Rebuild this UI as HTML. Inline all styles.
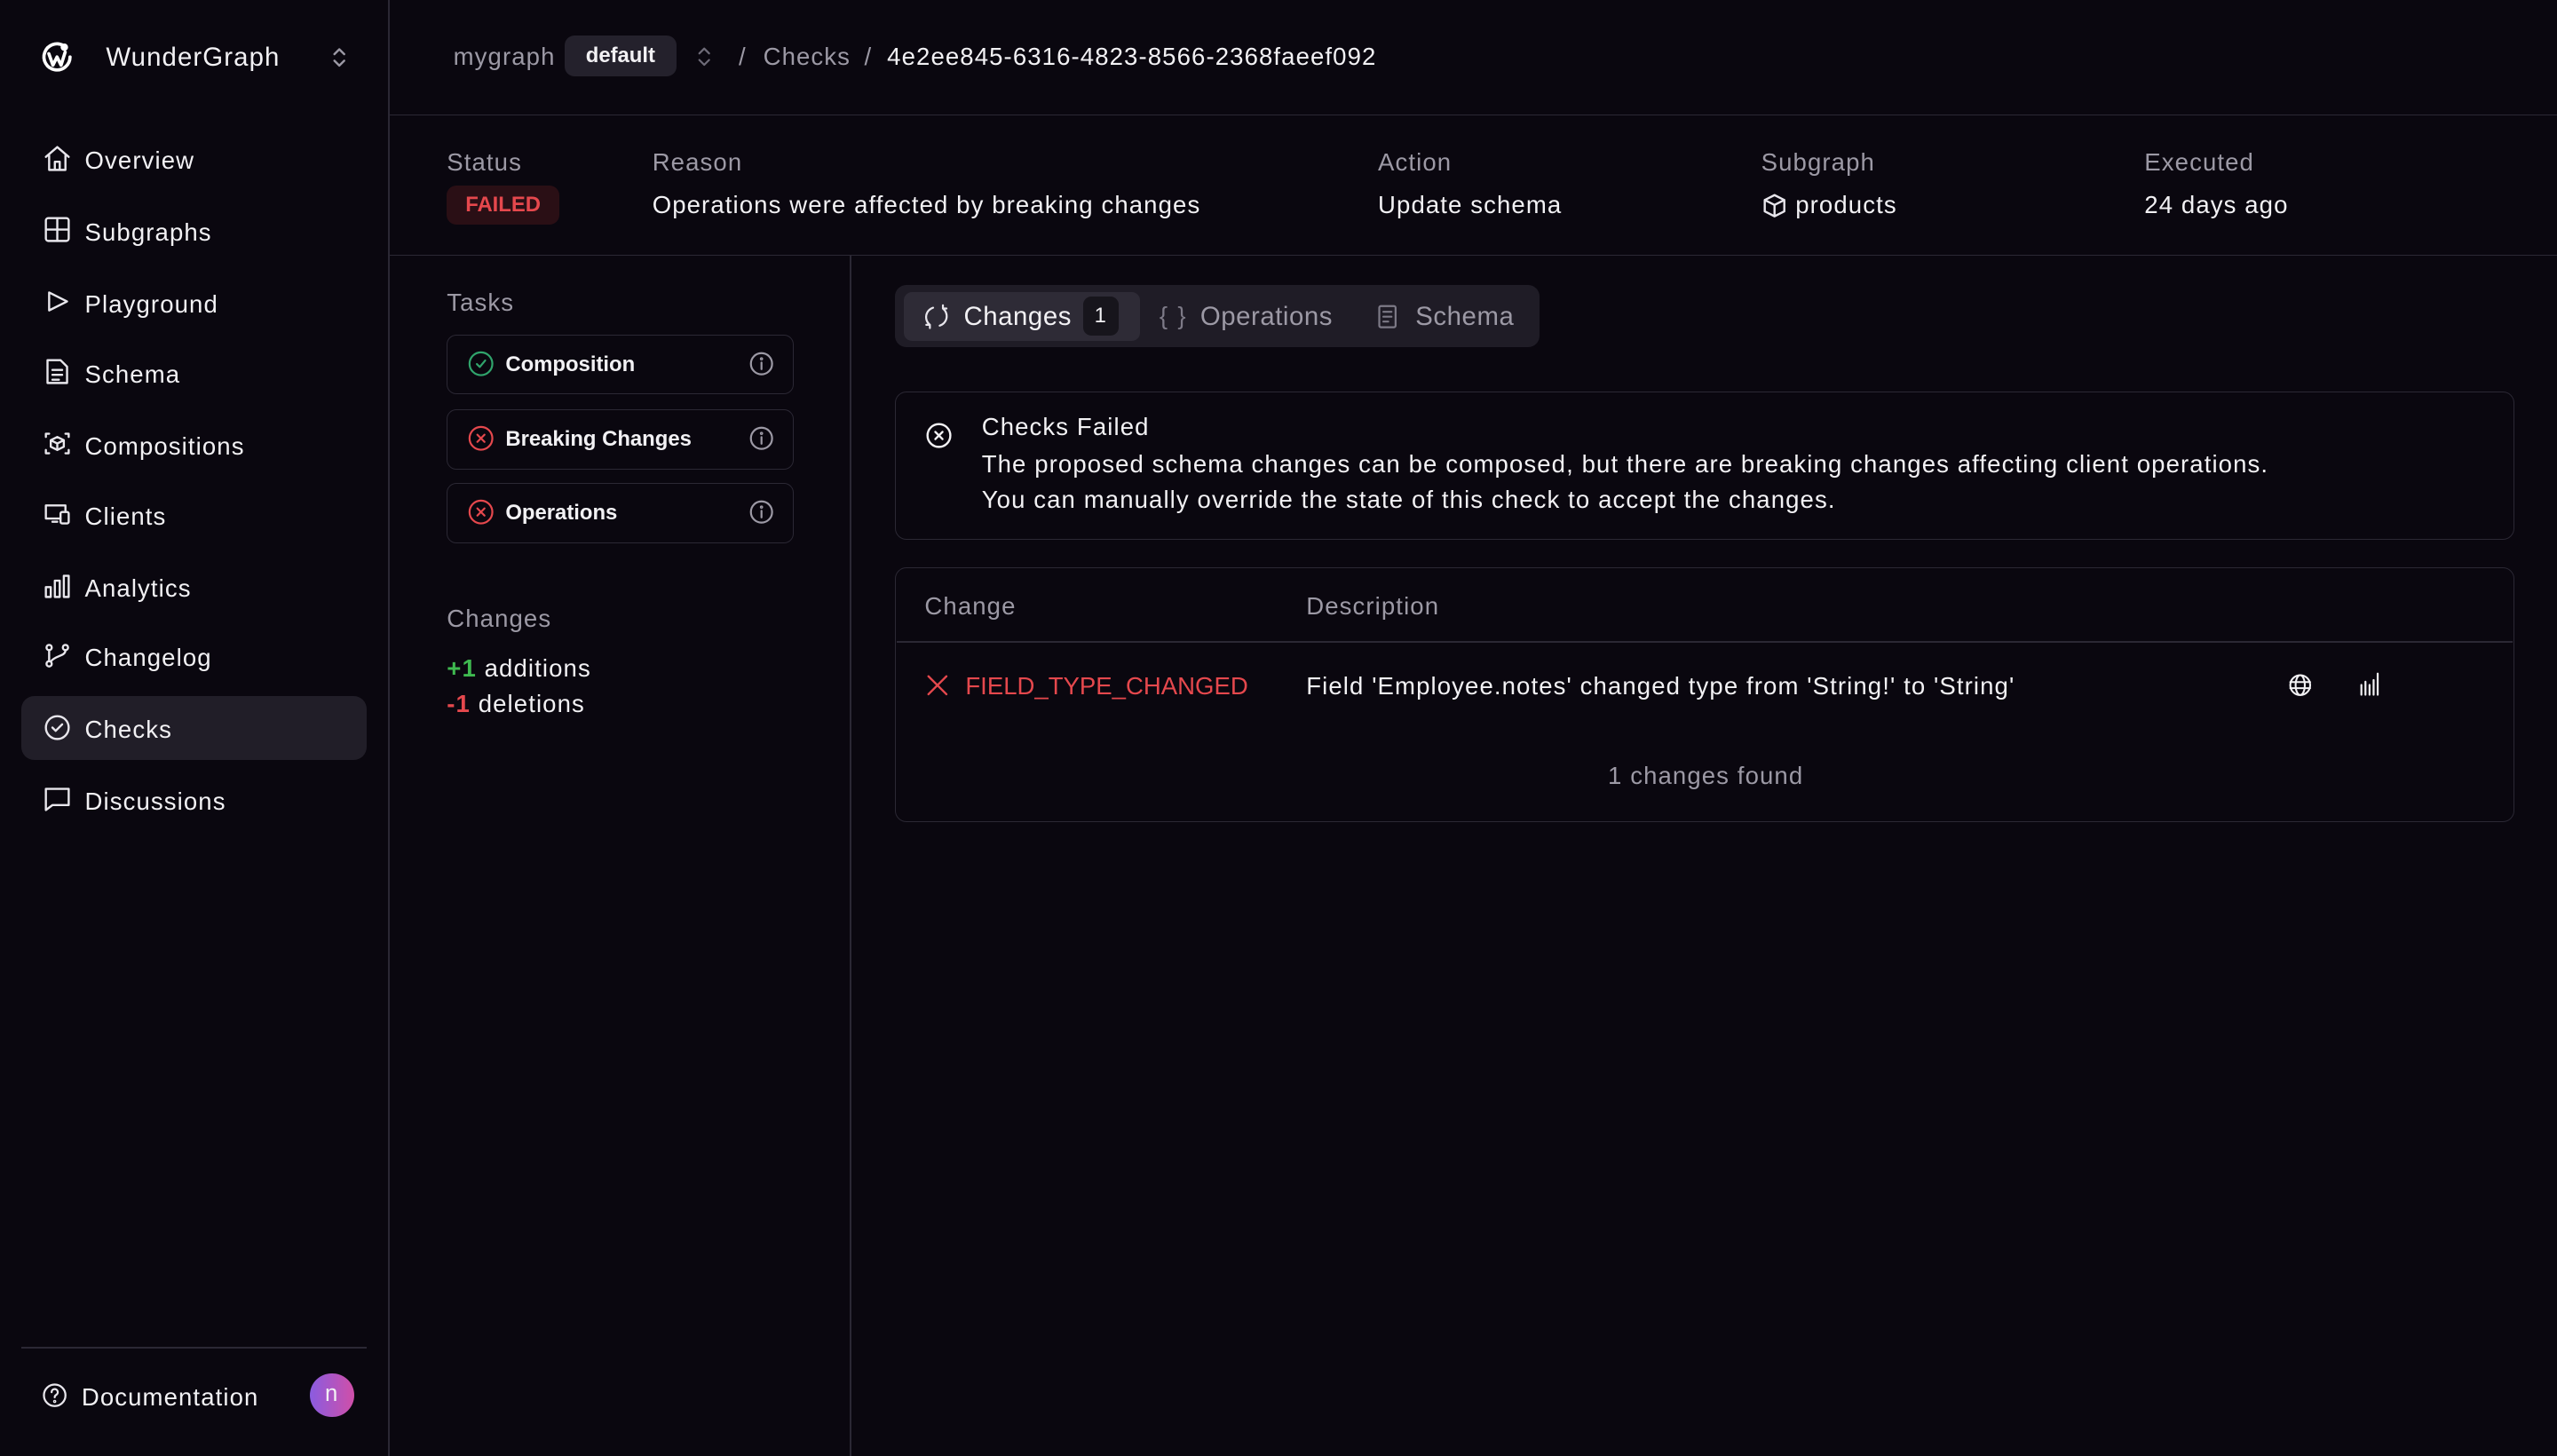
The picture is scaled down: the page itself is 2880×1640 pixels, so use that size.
<!DOCTYPE html>
<html><head><meta charset="utf-8">
<style>
*{box-sizing:border-box;margin:0;padding:0}
html,body{width:2880px;height:1640px;overflow:hidden;background:#0a070f}
#r{zoom:1.83673;width:1568px;height:893px;position:relative;font-family:"Liberation Sans",sans-serif;color:#f2f1f4;font-size:15px;background:#0a070f;letter-spacing:0.6px}
.a{position:absolute;white-space:nowrap;margin-top:1px}
.g{color:#9c99a5}
.b{border:1px solid #2b2834;margin-top:0}
.t{letter-spacing:0}
svg{position:absolute;fill:none;stroke-linecap:round;stroke-linejoin:round}
.nav svg{stroke:#e8e6ec;stroke-width:1.3}
</style></head><body><div id="r">
<!-- sidebar -->
<div class="a" style="left:238px;top:0;width:1px;height:893px;background:#2b2834;margin:0"></div>
<svg style="left:24px;top:24px" width="22" height="22" viewBox="0 0 22 22" stroke="#fff" stroke-width="2"><path d="M15 4A8 8 0 1 0 19 11"/><path d="M6 9l2.5 7 2.5-5 2.5 5 2.5-8"/><circle cx="15.5" cy="5" r="1.3" fill="#fff"/></svg>
<div class="a" style="left:65px;top:25px;font-size:16px">WunderGraph</div>
<svg style="left:203px;top:27px" width="10" height="16" viewBox="0 0 10 16" stroke="#9c99a5" stroke-width="1.3"><path d="M2 6l3-3 3 3M2 10l3 3 3-3"/></svg>
<div class="nav">
<svg style="left:26px;top:88px" width="18" height="18" viewBox="0 0 18 18"><path d="M2 8L9 2l7 6M4 7v9h10V7M7.5 16v-5h3v5"/></svg>
<div class="a" style="left:52px;top:89px">Overview</div>
<svg style="left:26px;top:132px" width="18" height="18" viewBox="0 0 18 18"><rect x="2" y="2" width="14" height="14" rx="1.5"/><path d="M9 2v14M2 9h14"/></svg>
<div class="a" style="left:52px;top:133px">Subgraphs</div>
<svg style="left:26px;top:176px" width="18" height="18" viewBox="0 0 18 18"><path d="M4 3.5l11 5.5-11 5.5z"/></svg>
<div class="a" style="left:52px;top:177px">Playground</div>
<svg style="left:26px;top:219px" width="18" height="18" viewBox="0 0 18 18"><path d="M3 2h8l4 4v10H3zM6 8h6M6 11h6M6 14h4"/></svg>
<div class="a" style="left:52px;top:220px">Schema</div>
<svg style="left:26px;top:263px" width="18" height="18" viewBox="0 0 18 18"><path d="M2 5V3h2M14 3h2v2M16 13v2h-2M4 15H2v-2M9 5l4 2v4l-4 2-4-2V7zM5 7l4 2 4-2M9 9v4"/></svg>
<div class="a" style="left:52px;top:264px">Compositions</div>
<svg style="left:26px;top:306px" width="18" height="18" viewBox="0 0 18 18"><path d="M11 12H2V4h12v3M6 14h3"/><rect x="11" y="8" width="5" height="7" rx="1"/></svg>
<div class="a" style="left:52px;top:307px">Clients</div>
<svg style="left:26px;top:350px" width="18" height="18" viewBox="0 0 18 18"><rect x="2" y="10" width="3" height="6"/><rect x="7.5" y="6" width="3" height="10"/><rect x="13" y="3" width="3" height="13"/></svg>
<div class="a" style="left:52px;top:351px">Analytics</div>
<svg style="left:26px;top:393px" width="18" height="18" viewBox="0 0 18 18"><circle cx="4" cy="4" r="1.6"/><circle cx="4" cy="14" r="1.6"/><circle cx="14" cy="4" r="1.6"/><path d="M4 5.6v6.8M14 5.6c0 4-6 3-9 7"/></svg>
<div class="a" style="left:52px;top:394px">Changelog</div>
<div class="a" style="left:13px;top:427px;width:212px;height:39px;background:#211e28;border-radius:8px;margin:0"></div>
<svg style="left:26px;top:437px" width="18" height="18" viewBox="0 0 18 18"><circle cx="9" cy="9" r="7"/><path d="M6 9l2 2 4-4"/></svg>
<div class="a" style="left:52px;top:438px">Checks</div>
<svg style="left:26px;top:481px" width="18" height="18" viewBox="0 0 18 18"><path d="M2 3h14v10H6l-4 3z"/></svg>
<div class="a" style="left:52px;top:482px">Discussions</div>
</div>
<div class="a" style="left:13px;top:826px;width:212px;height:1px;background:#2b2834;margin:0"></div>
<svg style="left:25px;top:847px" width="17" height="17" viewBox="0 0 18 18" stroke="#e8e6ec" stroke-width="1.3"><circle cx="9" cy="9" r="7"/><path d="M7 7a2 2 0 1 1 3 1.7c-.7.4-1 .8-1 1.6"/><circle cx="9" cy="13" r=".4"/></svg>
<div class="a" style="left:50px;top:847px">Documentation</div>
<div class="a" style="left:190px;top:842px;width:27px;height:27px;border-radius:50%;background:linear-gradient(90deg,#8a5ce0,#d04fa8);text-align:center;line-height:26px;font-size:14px;margin:0">n</div>
<!-- header -->
<div class="a g" style="left:278px;top:25px">mygraph</div>
<div class="a t" style="left:346px;top:22px;width:69px;height:25px;background:#24212c;border-radius:6px;text-align:center;line-height:25px;font-size:13px;font-weight:bold;margin:0">default</div>
<svg style="left:427px;top:28px" width="10" height="14" viewBox="0 0 10 14" stroke="#6e6b78" stroke-width="1.2"><path d="M2 5l3-3 3 3M2 9l3 3 3-3"/></svg>
<div class="a g" style="left:453px;top:25px">/</div>
<div class="a g" style="left:468px;top:25px">Checks</div>
<div class="a g" style="left:530px;top:25px">/</div>
<div class="a" style="left:544px;top:25px">4e2ee845-6316-4823-8566-2368faeef092</div>
<div class="a" style="left:239px;top:70px;width:1329px;height:1px;background:#2b2834;margin:0"></div>
<div class="a g" style="left:274px;top:90px">Status</div>
<div class="a t" style="left:274px;top:114px;width:69px;height:24px;background:#2a0f15;border-radius:6px;text-align:center;line-height:24px;font-size:13px;font-weight:bold;color:#e5484d;margin:0">FAILED</div>
<div class="a g" style="left:400px;top:90px">Reason</div>
<div class="a" style="left:400px;top:116px">Operations were affected by breaking changes</div>
<div class="a g" style="left:845px;top:90px">Action</div>
<div class="a" style="left:845px;top:116px">Update schema</div>
<div class="a g" style="left:1080px;top:90px">Subgraph</div>
<svg style="left:1080px;top:118px" width="16" height="16" viewBox="0 0 16 16" stroke="#e8e6ec" stroke-width="1.3"><path d="M8 1.5l6 3v7l-6 3-6-3v-7zM2 4.5l6 3 6-3M8 7.5v7"/></svg>
<div class="a" style="left:1101px;top:116px">products</div>
<div class="a g" style="left:1315px;top:90px">Executed</div>
<div class="a" style="left:1315px;top:116px">24 days ago</div>
<div class="a" style="left:239px;top:156px;width:1329px;height:1px;background:#2b2834;margin:0"></div>
<div class="a" style="left:521px;top:157px;width:1px;height:736px;background:#2b2834;margin:0"></div>
<!-- tasks -->
<div class="a g" style="left:274px;top:176px">Tasks</div>
<div class="a b" style="left:274px;top:205px;width:213px;height:37px;border-radius:6px"></div>
<div class="a b" style="left:274px;top:251px;width:213px;height:37px;border-radius:6px"></div>
<div class="a b" style="left:274px;top:296px;width:213px;height:37px;border-radius:6px"></div>
<svg style="left:287px;top:215px" width="16" height="16" viewBox="0 0 16 16" stroke="#30a46c" stroke-width="1.2"><circle cx="8" cy="8" r="7"/><path d="M5.5 8.2l1.8 1.8 3.3-4"/></svg>
<svg style="left:287px;top:261px" width="16" height="16" viewBox="0 0 16 16" stroke="#e5484d" stroke-width="1.2"><circle cx="8" cy="8" r="7"/><path d="M5.8 5.8l4.4 4.4M10.2 5.8l-4.4 4.4"/></svg>
<svg style="left:287px;top:306px" width="16" height="16" viewBox="0 0 16 16" stroke="#e5484d" stroke-width="1.2"><circle cx="8" cy="8" r="7"/><path d="M5.8 5.8l4.4 4.4M10.2 5.8l-4.4 4.4"/></svg>
<div class="a t" style="left:310px;top:215px;font-size:13px;font-weight:bold">Composition</div>
<div class="a t" style="left:310px;top:261px;font-size:13px;font-weight:bold">Breaking Changes</div>
<div class="a t" style="left:310px;top:306px;font-size:13px;font-weight:bold">Operations</div>
<svg style="left:459px;top:215px" width="16" height="16" viewBox="0 0 16 16" stroke="#9c99a5" stroke-width="1.2"><circle cx="8" cy="8" r="6.5"/><path d="M8 7.3v4"/><circle cx="8" cy="5" r=".4"/></svg>
<svg style="left:459px;top:261px" width="16" height="16" viewBox="0 0 16 16" stroke="#9c99a5" stroke-width="1.2"><circle cx="8" cy="8" r="6.5"/><path d="M8 7.3v4"/><circle cx="8" cy="5" r=".4"/></svg>
<svg style="left:459px;top:306px" width="16" height="16" viewBox="0 0 16 16" stroke="#9c99a5" stroke-width="1.2"><circle cx="8" cy="8" r="6.5"/><path d="M8 7.3v4"/><circle cx="8" cy="5" r=".4"/></svg>
<div class="a g" style="left:274px;top:370px">Changes</div>
<div class="a" style="left:274px;top:400px"><b style="color:#3fb950">+1</b> additions</div>
<div class="a" style="left:274px;top:422px"><b style="color:#e5484d">-1</b> deletions</div>
<!-- tabs -->
<div class="a" style="left:549px;top:175px;width:395px;height:38px;background:#1f1c26;border-radius:7px;margin:0"></div>
<div class="a" style="left:554px;top:179px;width:145px;height:30px;background:#2e2b36;border-radius:5px;margin:0"></div>
<svg style="left:566px;top:186px" width="16" height="16" viewBox="0 0 16 16" stroke="#e8e6ec" stroke-width="1.2"><path d="M6 2.5A6 6 0 0 0 4 13M10 13.5A6 6 0 0 0 12 3M4 13H1.8M4 13v2M12 3h2.2M12 3V1"/></svg>
<div class="a" style="left:591px;top:184px;font-size:16px;letter-spacing:0.3px">Changes</div>
<div class="a" style="left:664px;top:182px;width:22px;height:24px;background:#17151c;border-radius:5px;text-align:center;line-height:24px;font-size:13px;margin:0">1</div>
<div class="a" style="left:711px;top:184px;font-size:15px;color:#7d7a87;letter-spacing:1px">{ }</div>
<div class="a" style="left:736px;top:184px;font-size:16px;color:#9c99a5;letter-spacing:0.3px">Operations</div>
<svg style="left:843px;top:186px" width="16" height="16" viewBox="0 0 16 16" stroke="#7d7a87" stroke-width="1.2"><rect x="3" y="1.5" width="10" height="13" rx="1"/><path d="M5.5 5h5M5.5 8h5M5.5 11h3"/></svg>
<div class="a" style="left:868px;top:184px;font-size:16px;color:#9c99a5;letter-spacing:0.3px">Schema</div>
<!-- alert -->
<div class="a b" style="left:549px;top:240px;width:993px;height:91px;border-radius:7px"></div>
<svg style="left:567px;top:258px" width="18" height="18" viewBox="0 0 18 18" stroke="#f2f1f4" stroke-width="1.3"><circle cx="9" cy="9" r="7"/><path d="M6.8 6.8l4.4 4.4M11.2 6.8l-4.4 4.4"/></svg>
<div class="a" style="left:602px;top:252px">Checks Failed</div>
<div class="a" style="left:602px;top:275px">The proposed schema changes can be composed, but there are breaking changes affecting client operations.</div>
<div class="a" style="left:602px;top:297px">You can manually override the state of this check to accept the changes.</div>
<!-- table -->
<div class="a b" style="left:549px;top:348px;width:993px;height:156px;border-radius:7px"></div>
<div class="a" style="left:550px;top:393px;width:991px;height:1px;background:#2b2834;margin:0"></div>
<div class="a g" style="left:567px;top:362px">Change</div>
<div class="a g" style="left:801px;top:362px">Description</div>
<svg style="left:568px;top:413px" width="14" height="14" viewBox="0 0 14 14" stroke="#e5484d" stroke-width="1.3"><path d="M1.5 1.5l11 11M12.5 1.5l-11 11"/></svg>
<div class="a" style="left:592px;top:411px;color:#e5484d;letter-spacing:0">FIELD_TYPE_CHANGED</div>
<div class="a" style="left:801px;top:411px">Field 'Employee.notes' changed type from 'String!' to 'String'</div>
<svg style="left:1403px;top:412px" width="15" height="16" viewBox="0 0 16 16" stroke="#f2f1f4" stroke-width="1.2"><circle cx="8" cy="8" r="6.5"/><ellipse cx="8" cy="8" rx="3" ry="6.5"/><path d="M1.5 6h13M1.5 10h13"/></svg>
<svg style="left:1446px;top:411px" width="16" height="16" viewBox="0 0 16 16" stroke="#f2f1f4" stroke-width="1.2"><path d="M2 15V9M4.5 15V7M7 15V9M9.5 15V6M12 15V2"/></svg>
<div class="a g" style="left:986px;top:466px">1 changes found</div>
</div></body></html>
